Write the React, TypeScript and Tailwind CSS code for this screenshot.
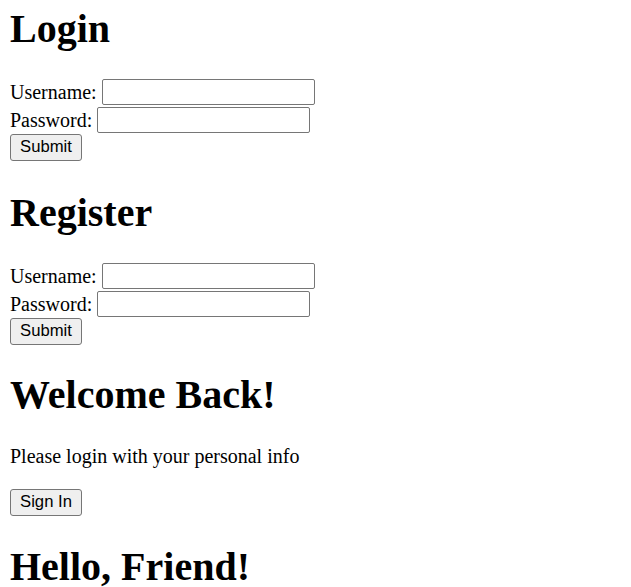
import { useState } from 'react';

const fieldClass =
    "w-[213px] h-[26px] px-[3px] border border-[#767676] rounded-[2px] bg-white font-['Liberation_Sans',Arial,sans-serif] text-[16.67px] text-black outline-none";

const buttonClass =
    "w-[72px] h-[27px] border border-[#767676] rounded-[3px] bg-[#efefef] font-['Liberation_Sans',Arial,sans-serif] text-[16.67px] text-black leading-none";

function AuthForm() {
    const [userName, setUserName] = useState('');
    const [password, setPassword] = useState('');

    return (
        <form onSubmit={(e) => e.preventDefault()} className="flex flex-col">
            <div className="flex items-center gap-[5px] h-[27.5px]">
                <label className="pt-[1px]">Username:</label>
                <input
                    type="text"
                    value={userName}
                    onChange={(e) => setUserName(e.target.value)}
                    className={fieldClass}
                />
            </div>
            <div className="flex items-center gap-[5px] h-[27.5px]">
                <label className="pt-[1px]">Password:</label>
                <input
                    type="password"
                    value={password}
                    onChange={(e) => setPassword(e.target.value)}
                    className={fieldClass}
                />
            </div>
            <div className="h-[27px]">
                <button type="submit" className={buttonClass}>
                    Submit
                </button>
            </div>
        </form>
    );
}

export default function App() {
    return (
        <div className="min-h-screen bg-white px-[10px] pt-[5.5px] font-['Liberation_Serif','Times_New_Roman',serif] text-[20px] leading-[23px] text-black">
            <h1 className="text-[40px] font-bold leading-[46px] mb-[27px]">Login</h1>
            <AuthForm />

            <h1 className="text-[40px] font-bold leading-[46px] mt-[29px] mb-[27px]">Register</h1>
            <AuthForm />

            <h1 className="text-[40px] font-bold leading-[46px] my-[27px]">Welcome Back!</h1>
            <p className="mb-[21px]">Please login with your personal info</p>
            <div className="h-[27px]">
                <button className={buttonClass}>Sign In</button>
            </div>

            <h1 className="text-[40px] font-bold leading-[46px] mt-[28px]">Hello, Friend!</h1>
        </div>
    );
}
